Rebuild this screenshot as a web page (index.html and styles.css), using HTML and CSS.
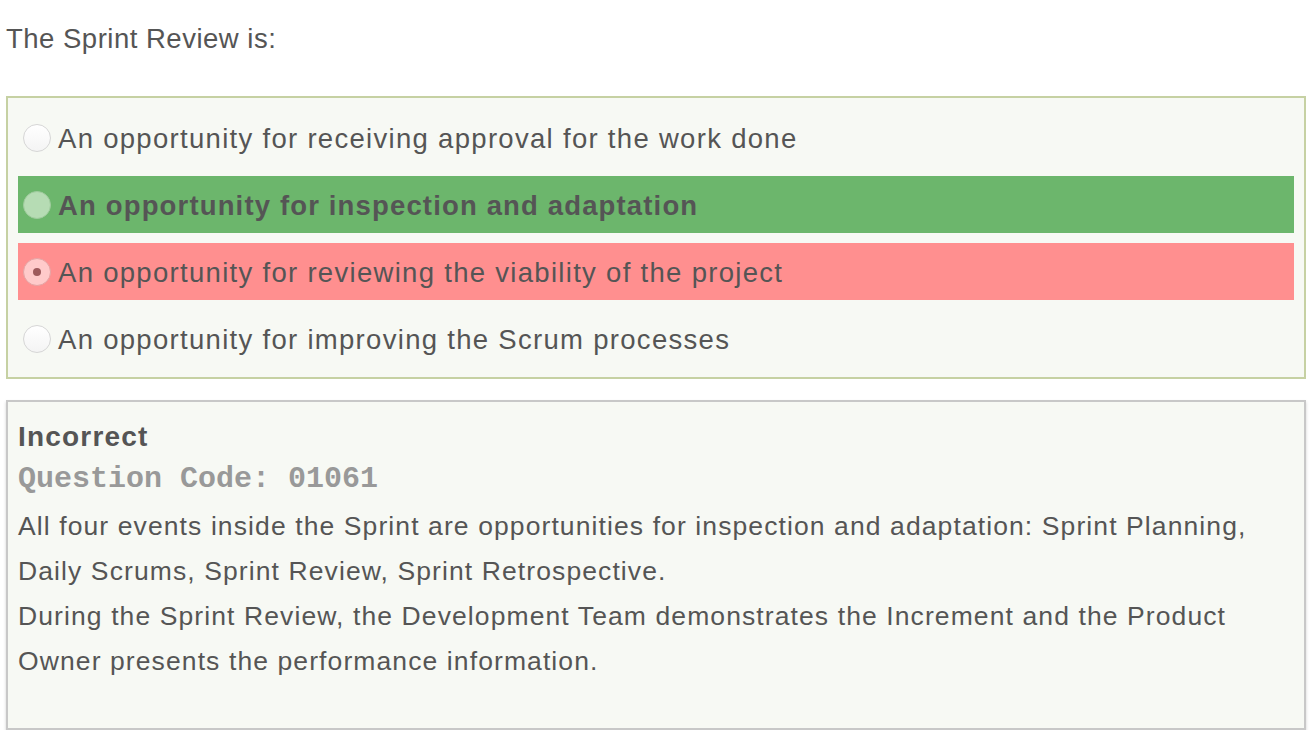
FILE: index.html
```html
<!DOCTYPE html>
<html>
<head>
<meta charset="utf-8">
<link rel="stylesheet" href="styles.css">
</head>
<body>
<div class="page">
  <p class="question">The Sprint Review is:</p>
  <div class="options">
    <label class="option"><span class="radio"></span><span class="label">An opportunity for receiving approval for the work done</span></label>
    <label class="option correct"><span class="radio"></span><span class="label">An opportunity for inspection and adaptation</span></label>
    <label class="option wrong"><span class="radio checked"></span><span class="label">An opportunity for reviewing the viability of the project</span></label>
    <label class="option"><span class="radio"></span><span class="label">An opportunity for improving the Scrum processes</span></label>
  </div>
  <div class="feedback">
    <div class="result">Incorrect</div>
    <div class="code">Question Code: 01061</div>
    <div class="explain">All four events inside the Sprint are opportunities for inspection and adaptation: Sprint Planning, Daily Scrums, Sprint Review, Sprint Retrospective.<br>During the Sprint Review, the Development Team demonstrates the Increment and the Product Owner presents the performance information.</div>
  </div>
</div>
</body>
</html>
```

FILE: styles.css
```css
html, body {
  margin: 0;
  padding: 0;
  background: #ffffff;
}
.page {
  padding: 0 8px 0 6px;
  font-family: "Liberation Sans", Arial, sans-serif;
  color: #555555;
}
.question {
  margin: 0;
  padding-top: 21px;
  font-size: 27.5px;
  letter-spacing: 0.5px;
  line-height: 36px;
  height: 75px;
}
.options {
  border: 2px solid #c6d1a3;
  background: #f7f9f4;
  padding: 11px 10px 10px 10px;
  display: flex;
  flex-direction: column;
  gap: 10px;
}
.option {
  display: flex;
  align-items: center;
  height: 57px;
  font-size: 27.5px;
  letter-spacing: 1.3px;
}
.option .label {
  padding-top: 2px;
}
.option.correct {
  background: #6cb66c;
  font-weight: bold;
  letter-spacing: 1.15px;
}
.option.wrong {
  background: #ff8f8f;
}
.radio {
  width: 26px;
  height: 26px;
  border-radius: 50%;
  border: 1px solid #d6d6d6;
  background: linear-gradient(#ffffff, #f4f4f4);
  margin: 0 7px 0 5px;
  flex: none;
  display: flex;
  align-items: center;
  justify-content: center;
  box-sizing: content-box;
}
.correct .radio {
  background: #b6dcb4;
  border-color: #9fcb9d;
}
.wrong .radio {
  background: #ffcaca;
  border-color: #e5a4a4;
}
.radio.checked::after {
  content: "";
  width: 8px;
  height: 8px;
  border-radius: 50%;
  background: #9e5a5c;
}
.feedback {
  margin-top: 21px;
  border: 2px solid #c8c8c8;
  background: #f7f9f4;
  box-shadow: 0 2px 3px rgba(0,0,0,0.18);
  padding: 17px 10px 44px 10px;
}
.result {
  font-weight: bold;
  font-size: 28px;
  letter-spacing: 1.2px;
  line-height: 36px;
}
.code {
  margin-top: 4px;
  font-family: "Liberation Mono", "Courier New", monospace;
  font-weight: bold;
  font-size: 30px;
  color: #999999;
  line-height: 40px;
}
.explain {
  margin-top: 5px;
  font-size: 26.5px;
  letter-spacing: 1.1px;
  line-height: 45px;
}
```
